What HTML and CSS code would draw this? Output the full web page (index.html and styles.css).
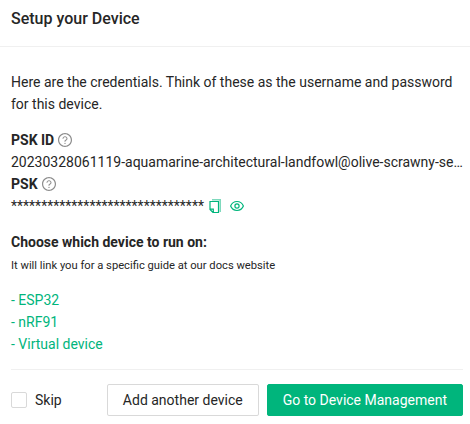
FILE: index.html
```html
<!DOCTYPE html>
<html lang="en">
<head>
<meta charset="utf-8">
<title>Setup your Device</title>
<link rel="stylesheet" href="styles.css">
</head>
<body>
<svg class="defs" aria-hidden="true">
  <symbol id="question" viewBox="64 64 896 896">
    <path d="M512 64C264.600 64 64 264.600 64 512s200.600 448 448 448 448-200.600 448-448S759.400 64 512 64zm0 820c-205.400 0-372-166.600-372-372s166.600-372 372-372 372 166.600 372 372-166.600 372-372 372z"/>
    <path d="M623.600 316.700C593.600 290.400 554 276 512 276s-81.600 14.500-111.600 40.700C369.200 344 352 380.700 352 420v7.600c0 4.400 3.600 8 8 8h48c4.400 0 8-3.600 8-8V420c0-44.100 43.100-80 96-80s96 35.900 96 80c0 31.100-22 59.600-56.100 72.700-21.200 8.100-39.200 22.300-52.100 40.900-13.100 19-19.900 41.800-19.900 64.900V620c0 4.400 3.600 8 8 8h48c4.400 0 8-3.600 8-8v-22.700a48.300 48.300 0 0130.900-44.800c59-22.700 97.100-74.700 97.100-132.500.1-39.300-17.100-76-48.300-103.300zM472 732a40 40 0 1080 0 40 40 0 10-80 0z"/>
  </symbol>
</svg>
<header class="header"><h1 class="title">Setup your Device</h1></header>
<main class="body">
  <p class="intro">Here are the credentials. Think of these as the username and password for this device.</p>
  <section class="credentials">
    <div class="label"><span>PSK ID</span><svg class="icon help"><use href="#question"/></svg></div>
    <div class="value">20230328061119-aquamarine-architectural-landfowl@olive-scrawny-se…</div>
    <div class="label"><span>PSK</span><svg class="icon help"><use href="#question"/></svg></div>
    <div class="secret"><span>********************************</span>
      <svg class="icon copy" viewBox="0 0 14 14"><path class="back" d="M4 0H13V13H11.500V1.500H4z"/><path class="front" d="M2 2.500H10.500V13.500H5L2 10.500z M2 10.200H5.300V13.500"/></svg>
      <svg class="icon eye" viewBox="0 0 14 14"><path d="M.6 7C2 3.700 4.200 2.500 7 2.500S12 3.700 13.400 7C12 10.300 9.800 11.500 7 11.500S2 10.300 .6 7z"/><circle cx="7" cy="7" r="2.100"/></svg>
    </div>
  </section>
  <section class="guides">
    <h2 class="subtitle">Choose which device to run on:</h2>
    <p class="note">It will link you for a specific guide at our docs website</p>
    <ul class="links">
      <li><a>- ESP32</a></li>
      <li><a>- nRF91</a></li>
      <li><a>- Virtual device</a></li>
    </ul>
  </section>
  <footer class="footer">
    <label class="skip"><span class="box"></span>Skip</label>
    <div class="actions">
      <button class="btn">Add another device</button>
      <button class="btn primary">Go to Device Management</button>
    </div>
  </footer>
</main>
</body>
</html>
```

FILE: styles.css
```css
* { box-sizing: border-box; }
body { margin: 0; background: #fff; color: #262626; font: 14px/22px Roboto, sans-serif; }
h1, h2, p, ul { margin: 0; padding: 0; }
.defs { position: absolute; width: 0; height: 0; }
.header { height: 47px; padding: 8px 11px 0; border-bottom: 1px solid #f0f0f0; }
.title { font-size: 16px; line-height: 22px; font-weight: 500; }
.body { padding: 24px 7px 0 11px; }
.credentials, .guides { margin-top: 14px; }
.label { display: flex; align-items: center; gap: 4px; font-weight: 700; }
.icon { display: block; flex: none; width: 14px; height: 14px; }
.help { fill: #8c8c8c; }
.value { white-space: nowrap; }
.secret { display: flex; align-items: center; }
.copy { margin-left: 4px; fill: none; }
.back { fill: #7fd9bd; }
.front { stroke: #00b57c; stroke-width: 1.2; }
.eye { margin-left: 8px; fill: none; stroke: #00b57c; stroke-width: 1.2; }
.subtitle { font-size: 14px; line-height: 22px; font-weight: 700; }
.note { padding-top: 1px; font-size: 11.2px; line-height: 24px; }
.links { margin-top: 11px; list-style: none; color: #00b57c; }
.footer { display: flex; align-items: center; justify-content: space-between; margin-top: 14px; padding-top: 14px; border-top: 1px solid #f0f0f0; }
.skip { display: flex; align-items: center; gap: 8px; }
.box { width: 16px; height: 16px; border: 1px solid #d9d9d9; border-radius: 2px; }
.actions { display: flex; gap: 8px; }
.btn { height: 32px; padding: 0 15px; border: 1px solid #d9d9d9; border-radius: 2px; background: #fff; color: #262626; font: 14px/22px Roboto, sans-serif; box-shadow: 0 2px 0 rgba(0, 0, 0, .016); }
.primary { border-color: #00b57c; background: #00b57c; color: #fff; box-shadow: 0 2px 0 rgba(0, 0, 0, .045); }
```
